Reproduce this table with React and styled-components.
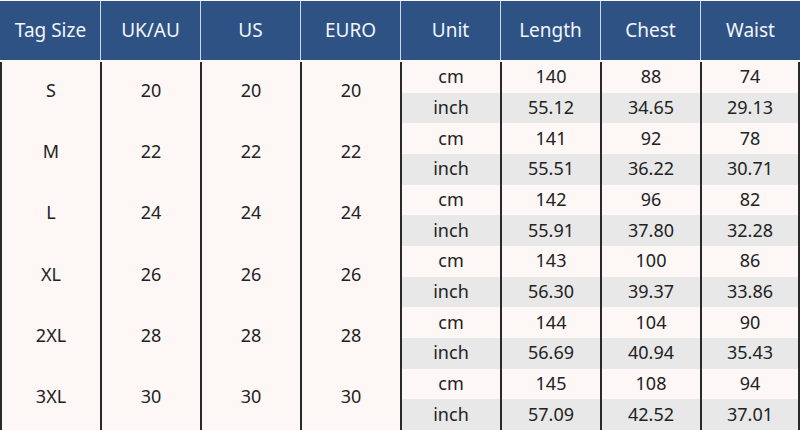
import React from "react";
import styled, { createGlobalStyle } from "styled-components";

const Global = createGlobalStyle`
  html, body { margin: 0; padding: 0; background: #fdf7f6; }
  body { font-family: "Noto Sans", "Open Sans", sans-serif; }
`;

const Table = styled.div`
  width: 800px;
  height: 430px;
  display: flex;
  flex-direction: column;
  padding-top: 1px;
  box-sizing: border-box;
  background: #fdf7f6;
  color: #222;
  font-size: 18px;
`;

const HeaderRow = styled.div`
  display: grid;
  grid-template-columns: repeat(8, 100px);
  height: 59px;
  margin-bottom: 2px;
`;

const Head = styled.div`
  background: #2d5283;
  color: #f2f5fa;
  display: flex;
  align-items: center;
  justify-content: center;
  font-size: 19px;
  border-left: 1px solid ${(p) => (p.$first ? "#2d5283" : "#c9d9ee")};
  padding-bottom: 2px;
`;

const Body = styled.div`
  flex: 1;
  display: flex;
  flex-direction: column;
`;

const SizeGroup = styled.div`
  flex: 1;
  display: grid;
  grid-template-columns: repeat(8, 100px);
  grid-template-rows: 1fr 1fr;
`;

const Merged = styled.div`
  grid-row: span 2;
  display: flex;
  align-items: center;
  justify-content: center;
  border-left: 2px solid #2a2a2a;
  padding-bottom: 6px;
`;

const Cell = styled.div`
  display: flex;
  align-items: center;
  justify-content: center;
  background: ${(p) => (p.$alt ? "#e8e8e8" : "#fdf7f6")};
  border-left: 2px solid #2a2a2a;
  border-right: ${(p) => (p.$last ? "2px solid #2a2a2a" : "none")};
  padding-bottom: 2px;
`;

const headers = ["Tag Size", "UK/AU", "US", "EURO", "Unit", "Length", "Chest", "Waist"];

const data = [
  ["S", "20", "20", "20", ["140", "88", "74"], ["55.12", "34.65", "29.13"]],
  ["M", "22", "22", "22", ["141", "92", "78"], ["55.51", "36.22", "30.71"]],
  ["L", "24", "24", "24", ["142", "96", "82"], ["55.91", "37.80", "32.28"]],
  ["XL", "26", "26", "26", ["143", "100", "86"], ["56.30", "39.37", "33.86"]],
  ["2XL", "28", "28", "28", ["144", "104", "90"], ["56.69", "40.94", "35.43"]],
  ["3XL", "30", "30", "30", ["145", "108", "94"], ["57.09", "42.52", "37.01"]],
];

function UnitRow({ unit, values, alt }) {
  return (
    <>
      <Cell $alt={alt}>{unit}</Cell>
      {values.map((v, i) => (
        <Cell key={i} $alt={alt} $last={i === values.length - 1}>
          {v}
        </Cell>
      ))}
    </>
  );
}

export default function App() {
  return (
    <>
      <Global />
      <Table>
        <HeaderRow>
          {headers.map((h, i) => (
            <Head key={h} $first={i === 0}>
              {h}
            </Head>
          ))}
        </HeaderRow>
        <Body>
          {data.map(([size, uk, us, eu, cm, inch]) => (
            <SizeGroup key={size}>
              <Merged>{size}</Merged>
              <Merged>{uk}</Merged>
              <Merged>{us}</Merged>
              <Merged>{eu}</Merged>
              <UnitRow unit="cm" values={cm} />
              <UnitRow unit="inch" values={inch} alt />
            </SizeGroup>
          ))}
        </Body>
      </Table>
    </>
  );
}
